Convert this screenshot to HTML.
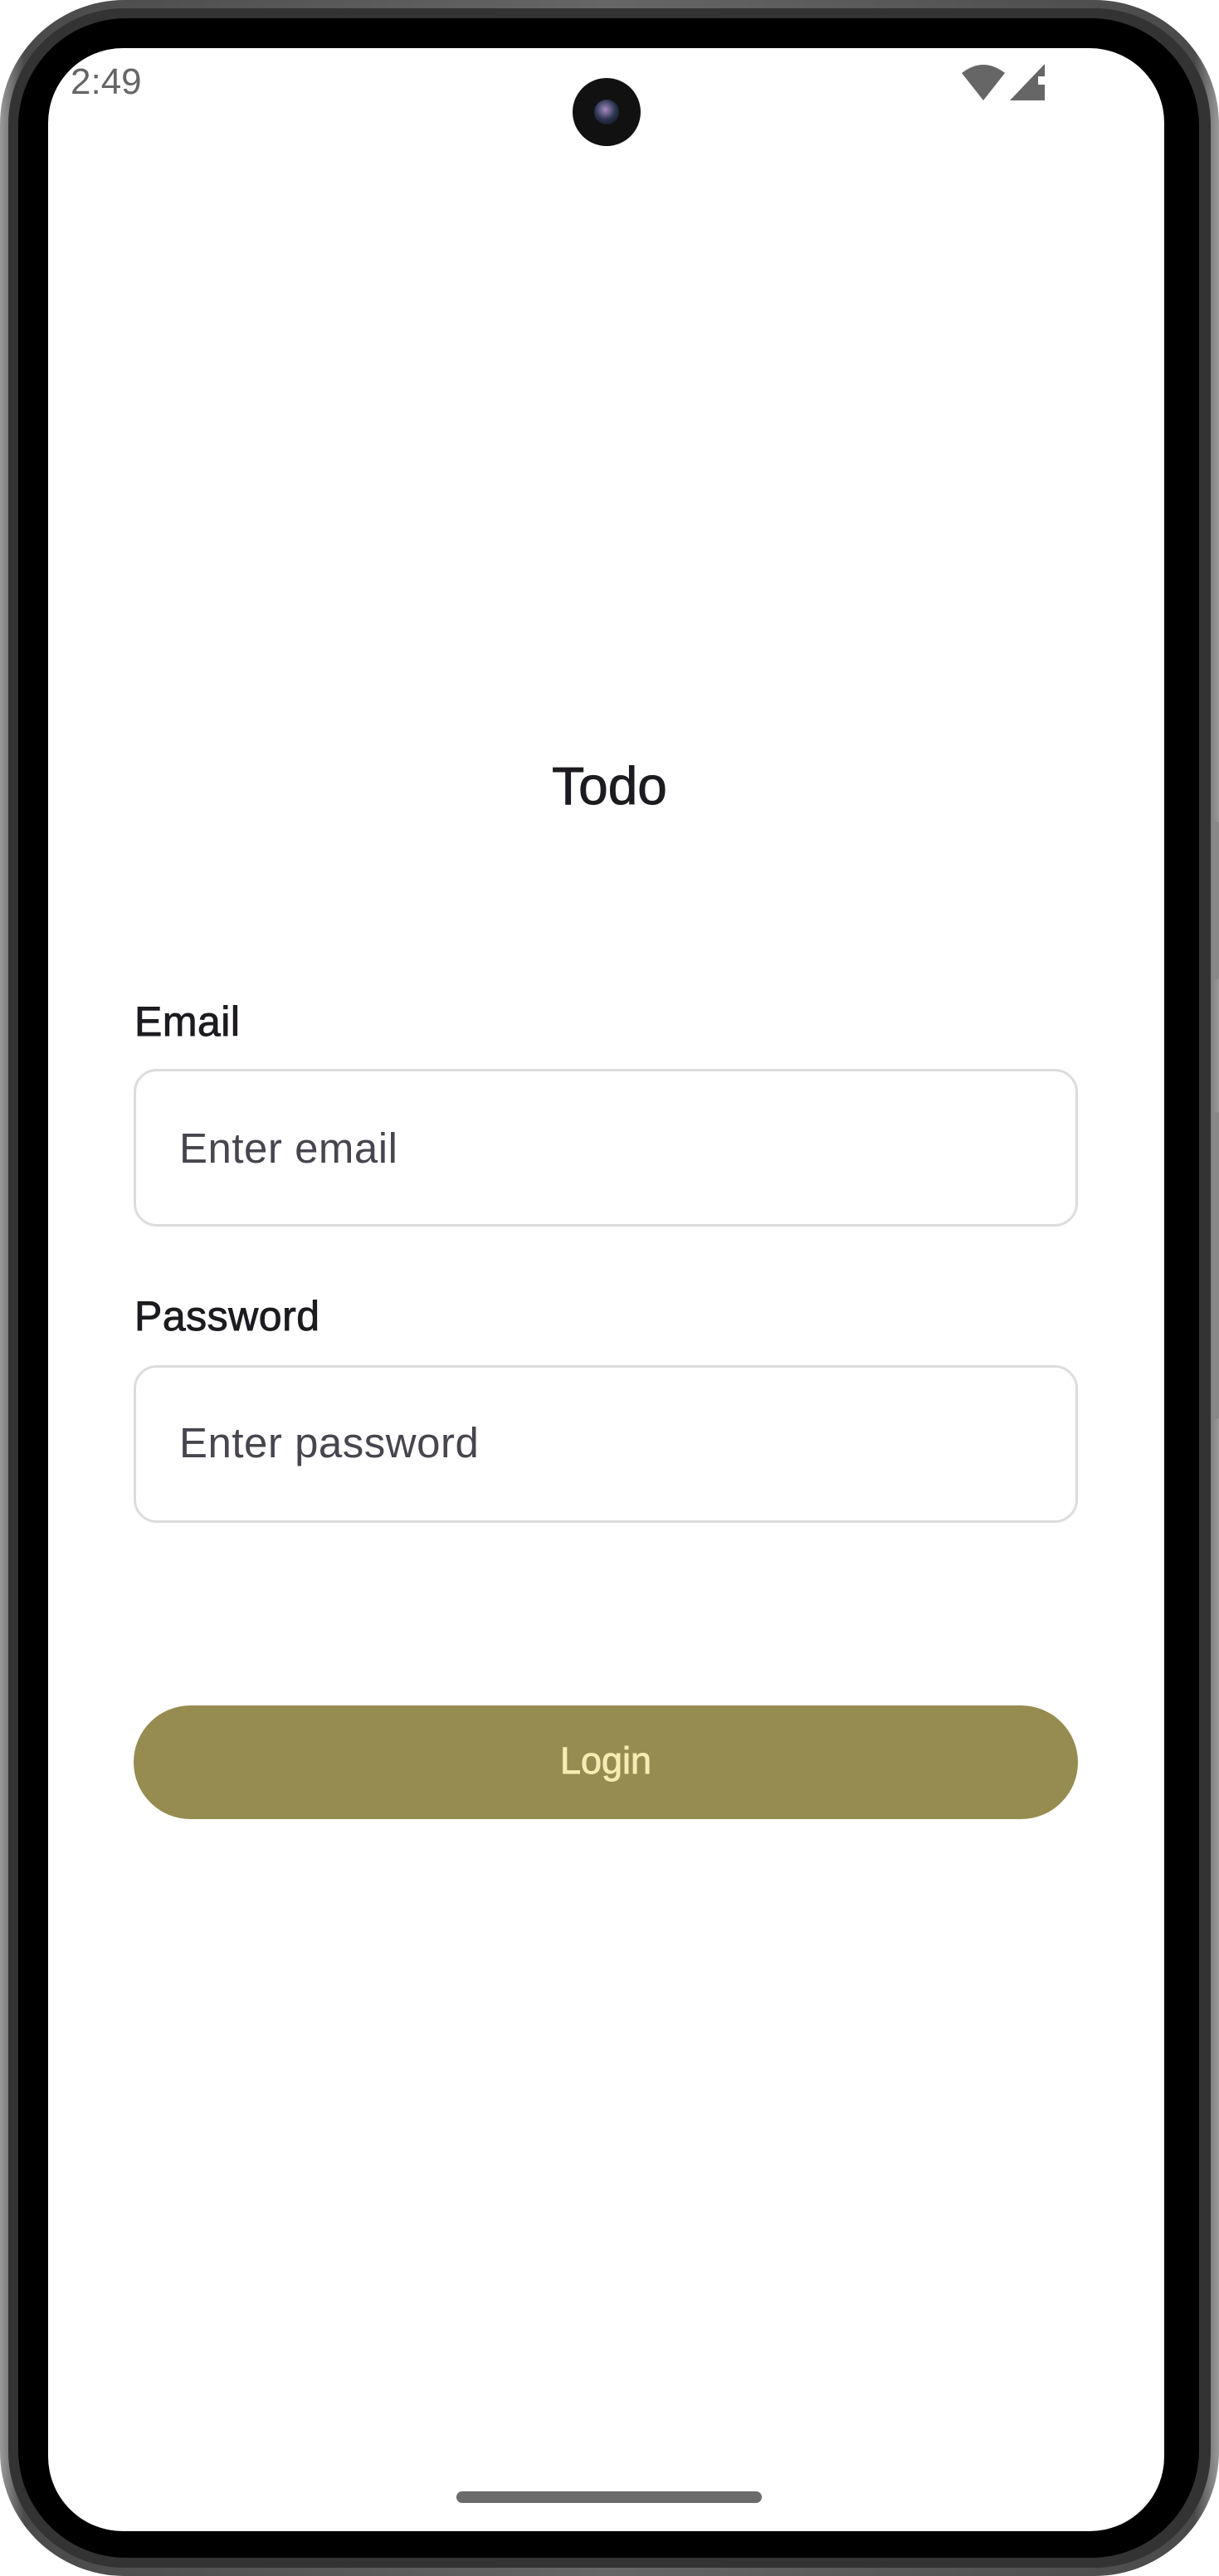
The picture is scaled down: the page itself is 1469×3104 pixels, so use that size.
<!DOCTYPE html>
<html><head><meta charset="utf-8"><style>
html,body{margin:0;padding:0;background:#fff;}
body{width:1469px;height:3104px;position:relative;overflow:hidden;font-family:"Liberation Sans",sans-serif;}
.body{position:absolute;left:0;top:0;width:1469px;height:3104px;border-radius:150px;background:linear-gradient(90deg,#9a9a9a,#4a4a4a 2%,#666 50%,#4a4a4a 98%,#9a9a9a);}
.rim{position:absolute;left:10px;top:10px;right:10px;bottom:10px;border-radius:140px;background:#333;}
.bezel{position:absolute;left:22px;top:22px;right:24px;bottom:22px;border-radius:130px;background:#000;}
.screen{position:absolute;left:58px;top:58px;width:1345px;height:2992px;border-radius:90px;background:#fff;overflow:hidden;}
.btn{position:absolute;right:0;width:8px;background:#888;border-radius:2px;}
.abs{position:absolute;}
.med{-webkit-text-stroke:0.9px currentColor;}
.lbl{position:absolute;left:162px;font-size:50px;color:#1d1b20;letter-spacing:0.5px;}
.box{position:absolute;left:161px;width:1132px;height:184px;border:3px solid #dcdcdc;border-radius:28px;box-sizing:content-box;}
.ph{position:absolute;left:216px;font-size:51px;color:#49454f;letter-spacing:0.5px;}
</style></head><body>
<div class="body"></div>
<div class="rim"></div>
<div class="bezel"></div>
<div class="btn" style="top:990px;height:190px"></div>
<div class="btn" style="top:1340px;height:370px"></div>
<div class="screen"></div>
<div class="abs" style="left:85px;top:74px;font-size:44px;color:#666;">2:49</div>
<div class="abs" style="left:690px;top:94px;width:82px;height:82px;border-radius:50%;background:#111;"></div>
<div class="abs" style="left:716px;top:120px;width:30px;height:30px;border-radius:50%;background:radial-gradient(circle at 45% 40%,#a78ac0,#2a3550 50%,#0a0a0a);"></div>
<svg class="abs" style="left:1155px;top:74px" width="110" height="50" viewBox="0 0 110 50">
<path d="M4 14 Q30 -6 56 14 L30 47 Z" fill="#666"/>
<path d="M62 47 L104 3 L104 18 L96 18 L96 28 L104 28 L104 47 Z" fill="#666"/>
</svg>
<div class="abs med" style="left:0;width:1469px;top:910px;text-align:center;font-size:64px;color:#1d1b20;">Todo</div>
<div class="lbl med" style="top:1202px">Email</div>
<div class="box" style="top:1288px"></div>
<div class="ph" style="top:1354px">Enter email</div>
<div class="lbl med" style="top:1557px">Password</div>
<div class="box" style="top:1645px"></div>
<div class="ph" style="top:1709px">Enter password</div>
<div class="abs med" style="left:161px;top:2055px;width:1138px;height:137px;border-radius:69px;background:#968c50;color:#f6ebb2;font-size:45px;text-align:center;line-height:134px;">Login</div>
<div class="abs" style="left:550px;top:3002px;width:368px;height:14px;border-radius:7px;background:#6b6b6b;"></div>
</body></html>
